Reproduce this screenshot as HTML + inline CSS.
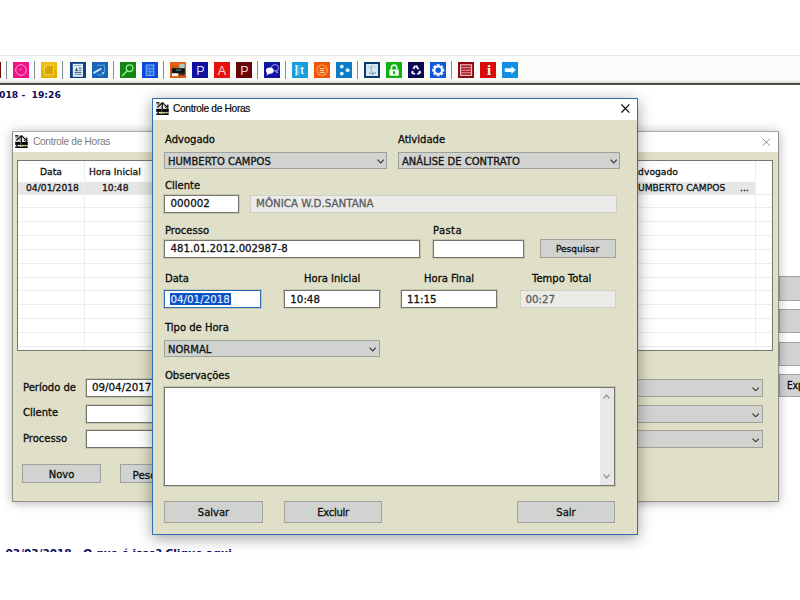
<!DOCTYPE html>
<html lang="pt-BR">
<head>
<meta charset="utf-8">
<title>Controle de Horas</title>
<style>
html,body{margin:0;padding:0;}
body{width:800px;height:600px;overflow:hidden;background:#fff;position:relative;
  font-family:"DejaVu Sans","Liberation Sans",sans-serif;font-size:10px;color:#111;}
.abs,.abs *{position:absolute;box-sizing:border-box;}
.abs{left:0;top:0;}
/* toolbar */
#tb{left:0;top:55px;width:800px;height:29px;background:#fbfbfa;border-top:1px solid #e9e9e9;}
#tbsh{left:0;top:80px;width:800px;height:5px;background:linear-gradient(#f2f3ef 0,#f2f3ef 1px,#e6e8e2 1px,#e6e8e2 2px,#d9dbd5 2px,#d9dbd5 3px,#4c4e48 3px,#4c4e48 5px);}
.ic{top:62px;width:16px;height:16px;overflow:hidden;margin-left:0.4px;}
.ic svg{left:0;top:0;width:16px;height:16px;}
.sep{top:61px;width:1px;height:18px;background:#858b93;}
#clock{left:-7.4px;top:88px;width:120px;height:14px;line-height:14px;font-weight:bold;font-size:9.2px;color:#0a0a5c;white-space:pre;}
#foot{left:-2.5px;top:546px;width:400px;height:6px;overflow:hidden;}
#foot span{left:0;top:0;line-height:14px;font-weight:bold;font-size:10.5px;color:#0a0a5c;white-space:pre;}
/* windows */
.win{background:#e0dfc8;}
#w1{left:12px;top:131px;width:767px;height:371px;border:1px solid #8f8f8a;border-top-color:#a8a8a4;box-shadow:0 1px 10px rgba(0,0,0,.3);}
#w2{left:152px;top:98px;width:486px;height:437px;border:1px solid #2b70b0;box-shadow:0 3px 14px rgba(0,0,0,.38);}
.tbar{left:0;top:0;right:0;background:#fff;}
.ttl{white-space:pre;font-family:"Liberation Sans",sans-serif;}
.lb{white-space:pre;line-height:12px;height:12px;font-size:10px;color:#0c0c0c;-webkit-text-stroke:0.3px #0c0c0c;}
.in{background:#fff;border:1px solid #75756d;box-shadow:0 0 0 1px rgba(120,120,105,.25);}
.in span,.dis span{font-size:10.3px;}
.in span,.cb span,.bt span,.dis span{white-space:pre;line-height:12px;height:12px;-webkit-text-stroke:0.3px currentColor;}
.dis{background:#ebebe8;border:1px solid #cfcfc6;color:#5c5c5c;}
.cb{background:#d0d3cf;border:1px solid #9fa198;}
.cb svg{width:7.4px;height:4.7px;}
.bt{background:#d0d3d0;border:1px solid #a0a29a;text-align:center;}
.bt span{left:0;right:0;text-align:center;-webkit-text-stroke:0.3px #0c0c0c;}
.list{background:#fff;border:1px solid #77776f;overflow:hidden;}
.list i{left:0;right:0;height:1px;background:#ececec;}
.list b{top:0;bottom:0;width:1px;background:#ececec;}
.list span{white-space:pre;line-height:12px;height:12px;font-size:9.2px;-webkit-text-stroke:0.3px #111;}
.rb{left:779px;width:30px;background:#d0d3d0;border:1px solid #a0a29a;}
</style>
</head>
<body>
<div class="abs" id="root">

<!-- toolbar -->
<div id="tb"></div>
<div id="tbsh"></div>
<!--ICONS-->
<div class="ic" style="left:-15px;background:#6e0a10"><svg viewBox="0 0 16 16"></svg></div>
<div class="ic" style="left:13px;background:#ee1289"><svg viewBox="0 0 16 16"><circle cx="8" cy="8" r="5.3" fill="none" stroke="#ff9ad6" stroke-width="1"/><path d="M6.8 7.2 L8.6 7.2" stroke="#ff9ad6" stroke-width="0.9"/></svg></div>
<div class="ic" style="left:41px;background:#e2b004"><svg viewBox="0 0 16 16"><rect x="0" y="0" width="16" height="8" fill="#edc413" opacity=".7"/><path d="M5.2 3.2 L12.6 3.2 L12.6 12.8 L3.4 12.8 L3.4 5 Z" fill="#d9a300" stroke="#f6dc62" stroke-width="0.9"/><path d="M5.2 3.2 L5.2 5 L3.4 5" fill="none" stroke="#f6dc62" stroke-width="0.8"/></svg></div>
<div class="ic" style="left:70px;background:#0e3f80"><svg viewBox="0 0 16 16"><rect x="2.8" y="1.8" width="10.2" height="13" fill="#e4eef8"/><rect x="4.4" y="3" width="7" height="0.9" fill="#7fa0c4"/><path d="M5 9 L6.6 5.2 L8 9 Z" fill="#35557d"/><rect x="8.6" y="5.6" width="3" height="0.9" fill="#35557d"/><rect x="8.6" y="7.6" width="3" height="0.9" fill="#35557d"/><rect x="4.6" y="9.8" width="7" height="1" fill="#35557d"/><rect x="4.6" y="11.8" width="7" height="1" fill="#5878a0"/></svg></div>
<div class="ic" style="left:92px;background:#1a64b6"><svg viewBox="0 0 16 16"><path d="M5 3.2 L12.4 3.2 L12.4 10.4 L10.4 12.8 L5.4 12.8" fill="none" stroke="#5da4e6" stroke-width="1"/><path d="M2.2 10.6 L8.6 7" stroke="#c4e6ff" stroke-width="2" stroke-linecap="round"/><path d="M10 11.4 L12 10.4" stroke="#c4e6ff" stroke-width="1.2"/></svg></div>
<div class="ic" style="left:120px;background:#148414"><svg viewBox="0 0 16 16"><circle cx="9.6" cy="6.2" r="3.3" fill="none" stroke="#8df08d" stroke-width="1.3"/><path d="M7.2 8.8 L2.6 13.6" stroke="#8df08d" stroke-width="1.5" stroke-linecap="round"/></svg></div>
<div class="ic" style="left:142px;background:#0c48da"><svg viewBox="0 0 16 16"><rect x="4.2" y="3" width="7.6" height="10.4" fill="#2a66e0" stroke="#7cb8ff" stroke-width="1"/><path d="M4.2 6.4 H11.8 M4.2 9.6 H11.8 M8 6.4 V13.4" stroke="#5a9cf4" stroke-width="0.9"/></svg></div>
<div class="ic" style="left:170px;background:#d65a10"><svg viewBox="0 0 16 16"><rect x="0" y="0" width="16" height="3" fill="#e0641a"/><path d="M9 2.4 L14.4 1.6 L14.8 7 L9.6 7 Z" fill="#9fd0d0"/><rect x="1.8" y="6.2" width="13" height="5.6" fill="#0c1416"/><rect x="6" y="7.4" width="5" height="1.4" fill="#2e7f8a"/><path d="M2.2 11.2 L8.4 11.2 L7.8 14.2 L1.8 14 Z" fill="#f4f8f8"/><rect x="9.2" y="11.4" width="5.4" height="2" fill="#3a2a20"/></svg></div>
<div class="ic" style="left:192px;background:#10109e"><svg viewBox="0 0 16 16"><text x="8.3" y="13.3" font-family="Liberation Sans, sans-serif" font-size="12.5" text-anchor="middle" fill="#dcdcff">P</text></svg></div>
<div class="ic" style="left:214px;background:#e8100c"><svg viewBox="0 0 16 16"><text x="8" y="13.3" font-family="Liberation Sans, sans-serif" font-size="12.5" text-anchor="middle" fill="#ffd4d4">A</text></svg></div>
<div class="ic" style="left:236px;background:#680808"><svg viewBox="0 0 16 16"><text x="8.3" y="13.3" font-family="Liberation Sans, sans-serif" font-size="12.5" text-anchor="middle" fill="#ffd0d8">P</text></svg></div>
<div class="ic" style="left:264px;background:#1414a2"><svg viewBox="0 0 16 16"><ellipse cx="11" cy="5.8" rx="3.6" ry="3.2" fill="none" stroke="#9c9cf0" stroke-width="1"/><path d="M12.4 8.6 L14 11 L10.6 9.2" fill="none" stroke="#9c9cf0" stroke-width="0.9"/><ellipse cx="5.8" cy="8.6" rx="3.8" ry="3.2" fill="#fff"/><path d="M3.4 10.6 L2.6 13.6 L6 11.6 Z" fill="#fff"/></svg></div>
<div class="ic" style="left:292px;background:#14a0dc"><svg viewBox="0 0 16 16"><rect x="3.4" y="3" width="2" height="10.4" fill="#e8f8ff"/><rect x="2.8" y="5.4" width="0.9" height="1.4" fill="#14a0dc"/><rect x="2.8" y="9.2" width="0.9" height="1.4" fill="#14a0dc"/><rect x="6.4" y="3" width="0.9" height="10.4" fill="#7fd0f2"/><text x="10.2" y="12.2" font-family="Liberation Sans, sans-serif" font-weight="bold" font-size="11" text-anchor="middle" fill="#f0fbff">t</text></svg></div>
<div class="ic" style="left:314px;background:#f05408"><svg viewBox="0 0 16 16"><circle cx="8" cy="8.2" r="5.2" fill="none" stroke="#ffb060" stroke-width="1.1"/><rect x="5.6" y="6" width="4.8" height="1.1" fill="#ffd8a0"/><rect x="5.6" y="8" width="4.8" height="1.1" fill="#ffd8a0"/><rect x="5.6" y="10" width="4.8" height="1.1" fill="#ffd8a0"/></svg></div>
<div class="ic" style="left:336px;background:#0c7cc8"><svg viewBox="0 0 16 16"><circle cx="5.8" cy="4.6" r="1.9" fill="#e4f6ff"/><circle cx="11.6" cy="8.2" r="1.9" fill="#e4f6ff"/><circle cx="5.8" cy="11.6" r="1.9" fill="#e4f6ff"/></svg></div>
<div class="ic" style="left:364px;background:#0c3c6c"><svg viewBox="0 0 16 16"><rect x="2" y="2" width="12" height="12" fill="#d4e8f6"/><path d="M8.6 3.4 C6.6 5.4 6.4 8.2 8.4 10.2 M8.6 10.2 L8.6 13" fill="none" stroke="#7a8c9c" stroke-width="0.9"/><path d="M5 10.6 C7 11.8 10 11.8 12 10.6" fill="none" stroke="#7a8c9c" stroke-width="0.9"/><path d="M5.4 4.6 L6.4 5.6 M10.4 4.4 L11 5.4" stroke="#a89c70" stroke-width="0.9"/></svg></div>
<div class="ic" style="left:386px;background:#10b010"><svg viewBox="0 0 16 16"><path d="M5.4 7.6 V5.8 A2.7 2.7 0 0 1 10.8 5.8 V7.6" fill="none" stroke="#e8ffe8" stroke-width="1.6"/><rect x="3.4" y="7.4" width="9.4" height="6.4" rx="0.8" fill="#f2fff2"/><rect x="7.2" y="9.2" width="1.8" height="3" fill="#10a010"/></svg></div>
<div class="ic" style="left:408px;background:#0a0a52"><svg viewBox="0 0 16 16"><path d="M8 3.4 L10.4 7.2 M11.4 8.8 L12 10.6 L9.2 12.2 M7 12.2 L4.2 11 L4.6 8.8 M5.4 7 L7.2 3.8" fill="none" stroke="#f0f0ff" stroke-width="1.9" stroke-linejoin="round"/></svg></div>
<div class="ic" style="left:430px;background:#1058d8"><svg viewBox="0 0 16 16"><g transform="translate(8.2,8.2)" fill="#f4faff"><rect x="-1.5" y="-6" width="3" height="3.2" transform="rotate(0)"/><rect x="-1.5" y="-6" width="3" height="3.2" transform="rotate(45)"/><rect x="-1.5" y="-6" width="3" height="3.2" transform="rotate(90)"/><rect x="-1.5" y="-6" width="3" height="3.2" transform="rotate(135)"/><rect x="-1.5" y="-6" width="3" height="3.2" transform="rotate(180)"/><rect x="-1.5" y="-6" width="3" height="3.2" transform="rotate(225)"/><rect x="-1.5" y="-6" width="3" height="3.2" transform="rotate(270)"/><rect x="-1.5" y="-6" width="3" height="3.2" transform="rotate(315)"/><circle r="4.6"/><circle r="2.7" fill="#1058d8"/></g></svg></div>
<div class="ic" style="left:458px;background:#8a0c12"><svg viewBox="0 0 16 16"><rect x="2.6" y="2.8" width="11" height="10.6" fill="#a82028" stroke="#ffd4d8" stroke-width="1"/><path d="M3.2 5.6 H13 M3.2 8.2 H13 M3.2 10.8 H13" stroke="#f0a8ac" stroke-width="0.9"/></svg></div>
<div class="ic" style="left:480px;background:#d80c0c"><svg viewBox="0 0 16 16"><text x="8.9" y="12.8" font-family="Liberation Serif, serif" font-weight="bold" font-size="14.5" text-anchor="middle" fill="#fff6f6">i</text></svg></div>
<div class="ic" style="left:502px;background:#1090e0"><svg viewBox="0 0 16 16"><path d="M2.8 6.3 H9.4 V4.3 L13.8 8.1 L9.4 11.9 V9.9 H2.8 Z" fill="#f0faff"/></svg></div>
<div class="sep" style="left:6px"></div><div class="sep" style="left:34px"></div><div class="sep" style="left:62px"></div><div class="sep" style="left:113px"></div><div class="sep" style="left:163px"></div><div class="sep" style="left:257px"></div><div class="sep" style="left:285px"></div><div class="sep" style="left:357px"></div><div class="sep" style="left:451px"></div>
<!--/ICONS-->

<div id="clock">2018 -  19:26</div>
<div id="foot"><span>- 03/03/2018 - O que é isso? Clique aqui</span></div>

<!-- buttons behind at the right edge -->
<div class="rb" style="top:276px;height:25px"></div>
<div class="rb" style="top:309px;height:24px"></div>
<div class="rb" style="top:342px;height:24px"></div>
<div class="rb" style="top:374px;height:23px"><span class="lb" style="left:7px;top:5px;font-family:'DejaVu Sans Condensed','DejaVu Sans',sans-serif">Exportar</span></div>

<!-- back window -->
<div class="win" id="w1">
  <div class="tbar" style="height:20px"></div>
<svg class="wi" style="left:2px;top:3px;width:13px;height:13px" viewBox="0 0 13 13"><rect x="0.3" y="0.8" width="5.4" height="7" fill="#c9c9c9"/><rect x="7" y="3.4" width="5" height="4" fill="#e4e4e4"/><path d="M0.2 0.8 H3.4" stroke="#0a0a0a" stroke-width="1.3"/><path d="M6.3 0.3 V11.6 M6.5 0.6 L1.4 5.4 M6.5 0.6 L11 5 M11.8 2.4 V11.4" fill="none" stroke="#0a0a0a" stroke-width="1.25"/><path d="M2.2 2.4 L3.6 3.8 M9.2 5 L10.4 6.6 M1.2 10.6 H3 M8.4 10.6 H10" stroke="#0a0a0a" stroke-width="0.9"/><rect x="0.2" y="7" width="5.4" height="2.9" fill="#050505"/><rect x="7" y="7" width="5.6" height="2.9" fill="#050505"/><rect x="4" y="10.4" width="8.4" height="0.9" fill="#e6e2a0"/><rect x="0.3" y="11.3" width="12.3" height="1.7" fill="#070707"/><rect x="4.6" y="11.3" width="3" height="0.7" fill="#cfcf88"/></svg>
  <span class="ttl" style="left:20px;top:3px;line-height:13px;font-size:10.2px;color:#7d7d7d;letter-spacing:-0.33px">Controle de Horas</span>
  <div class="list" style="left:4px;top:28px;width:756px;height:191px">
    <div style="left:0;top:21px;width:737px;height:12px;background:#e6e6e6"></div>
    <i style="top:33px"></i><i style="top:46px"></i><i style="top:60px"></i><i style="top:74px"></i><i style="top:88px"></i><i style="top:102px"></i><i style="top:116px"></i><i style="top:129px"></i><i style="top:143px"></i><i style="top:157px"></i><i style="top:171px"></i><i style="top:185px"></i>
    <b style="left:66px"></b><b style="left:737px"></b>
    <span style="left:22px;top:5px">Data</span>
    <span style="left:71px;top:5px">Hora Inicial</span>
    <span style="left:8px;top:21px">04/01/2018</span>
    <span style="left:84px;top:21px">10:48</span>
    <span style="left:614px;top:5px">Advogado</span>
    <span style="left:613px;top:21px">HUMBERTO CAMPOS</span>
    <span style="left:722px;top:21px">...</span>
  </div>
  <span class="lb" style="left:10px;top:250px">Período de</span>
  <div class="in" style="left:73px;top:247px;width:100px;height:18px"><span style="left:5px;top:1px">09/04/2017</span></div>
  <span class="lb" style="left:10px;top:275px">Cliente</span>
  <div class="in" style="left:73px;top:273px;width:100px;height:18px"></div>
  <span class="lb" style="left:10px;top:301px">Processo</span>
  <div class="in" style="left:73px;top:298px;width:100px;height:18px"></div>
  <div class="bt" style="left:9px;top:332px;width:79px;height:19px"><span style="top:4px">Novo</span></div>
  <div class="bt" style="left:107px;top:332px;width:78px;height:19px"><span style="top:4px;left:-3px;font-size:10.4px">Pesquisar</span></div>
  <div class="cb" style="left:500px;top:247px;width:250px;height:18px"><svg style="left:238px;top:6.6px" viewBox="0 0 8 5"><path d="M0.6 0.6 L4 4.1 L7.4 0.6" fill="none" stroke="#333" stroke-width="1.25"/></svg></div>
  <div class="cb" style="left:500px;top:273px;width:250px;height:18px"><svg style="left:238px;top:6.6px" viewBox="0 0 8 5"><path d="M0.6 0.6 L4 4.1 L7.4 0.6" fill="none" stroke="#333" stroke-width="1.25"/></svg></div>
  <div class="cb" style="left:500px;top:298px;width:250px;height:18px"><svg style="left:238px;top:6.6px" viewBox="0 0 8 5"><path d="M0.6 0.6 L4 4.1 L7.4 0.6" fill="none" stroke="#333" stroke-width="1.25"/></svg></div>
  <svg style="left:748.5px;top:5.5px;width:8.6px;height:8.3px" viewBox="0 0 9 9" preserveAspectRatio="none"><path d="M0.5 0.5 L8.5 8.5 M8.5 0.5 L0.5 8.5" stroke="#8a8a8a" stroke-width="1" fill="none"/></svg>
</div>

<!-- front dialog -->
<div class="win" id="w2">
  <div class="tbar" style="height:21px"></div>
  <div style="left:0;top:-1px;width:484px;height:436px">
<svg class="wi" style="left:3px;top:4px;width:13px;height:13px" viewBox="0 0 13 13"><rect x="0.3" y="0.8" width="5.4" height="7" fill="#c9c9c9"/><rect x="7" y="3.4" width="5" height="4" fill="#e4e4e4"/><path d="M0.2 0.8 H3.4" stroke="#0a0a0a" stroke-width="1.3"/><path d="M6.3 0.3 V11.6 M6.5 0.6 L1.4 5.4 M6.5 0.6 L11 5 M11.8 2.4 V11.4" fill="none" stroke="#0a0a0a" stroke-width="1.25"/><path d="M2.2 2.4 L3.6 3.8 M9.2 5 L10.4 6.6 M1.2 10.6 H3 M8.4 10.6 H10" stroke="#0a0a0a" stroke-width="0.9"/><rect x="0.2" y="7" width="5.4" height="2.9" fill="#050505"/><rect x="7" y="7" width="5.6" height="2.9" fill="#050505"/><rect x="4" y="10.4" width="8.4" height="0.9" fill="#e6e2a0"/><rect x="0.3" y="11.3" width="12.3" height="1.7" fill="#070707"/><rect x="4.6" y="11.3" width="3" height="0.7" fill="#cfcf88"/></svg>
  <span class="ttl" style="left:20px;top:4px;line-height:13px;font-size:10.2px;color:#0a0a0a;letter-spacing:-0.33px;-webkit-text-stroke:0.2px #0a0a0a">Controle de Horas</span>
  <svg style="left:468px;top:6px;width:9px;height:9px" viewBox="0 0 9 9"><path d="M0.4 0.4 L8.4 8.6 M8.4 0.4 L0.4 8.6" stroke="#111" stroke-width="1.25" fill="none"/></svg>

  <span class="lb" style="left:12px;top:36px">Advogado</span>
  <span class="lb" style="left:245px;top:36px">Atividade</span>
  <div class="cb" style="left:11px;top:54px;width:223px;height:17px"><span style="left:3px;top:3px">HUMBERTO CAMPOS</span><svg style="left:212px;top:6.4px" viewBox="0 0 8 5"><path d="M0.6 0.6 L4 4.1 L7.4 0.6" fill="none" stroke="#333" stroke-width="1.25"/></svg></div>
  <div class="cb" style="left:245px;top:54px;width:222px;height:17px"><span style="left:3px;top:3px">ANÁLISE DE CONTRATO</span><svg style="left:211px;top:6.4px" viewBox="0 0 8 5"><path d="M0.6 0.6 L4 4.1 L7.4 0.6" fill="none" stroke="#333" stroke-width="1.25"/></svg></div>

  <span class="lb" style="left:12px;top:82px">Cliente</span>
  <div class="in" style="left:11px;top:97px;width:75px;height:18px"><span style="left:5.5px;top:1px">000002</span></div>
  <div class="dis" style="left:97px;top:97px;width:367px;height:18px"><span style="left:5px;top:1px">MÔNICA W.D.SANTANA</span></div>

  <span class="lb" style="left:12px;top:127px">Processo</span>
  <span class="lb" style="left:280px;top:127px;letter-spacing:0.4px">Pasta</span>
  <div class="in" style="left:11px;top:142px;width:256px;height:18px"><span style="left:5.6px;top:2px;font-size:10.2px">481.01.2012.002987-8</span></div>
  <div class="in" style="left:280px;top:142px;width:91px;height:18px"></div>
  <div class="bt" style="left:387px;top:141px;width:76px;height:19px"><span style="top:3px;left:-1px;font-size:9px">Pesquisar</span></div>

  <span class="lb" style="left:12px;top:175px">Data</span>
  <span class="lb" style="left:151px;top:175px">Hora Inicial</span>
  <span class="lb" style="left:271px;top:175px">Hora Final</span>
  <span class="lb" style="left:379px;top:175px">Tempo Total</span>
  <div class="in" style="left:11px;top:192px;width:97px;height:18px;border-color:#2b6cb2"><span style="left:5px;top:2px;height:12px;line-height:12px;background:#0b52c6;color:#eaf3ff;padding:0 1.5px 0 0.5px;-webkit-text-stroke:0.1px #eaf3ff">04/01/2018</span></div>
  <div class="in" style="left:131px;top:192px;width:96px;height:18px"><span style="left:5.3px;top:2px">10:48</span></div>
  <div class="in" style="left:248px;top:192px;width:96px;height:18px"><span style="left:5px;top:2px">11:15</span></div>
  <div class="dis" style="left:367px;top:192px;width:96px;height:18px"><span style="left:4.5px;top:2px">00:27</span></div>

  <span class="lb" style="left:12px;top:224px">Tipo de Hora</span>
  <div class="cb" style="left:11px;top:242px;width:216px;height:17px"><span style="left:3px;top:3px">NORMAL</span><svg style="left:204px;top:6.4px" viewBox="0 0 8 5"><path d="M0.6 0.6 L4 4.1 L7.4 0.6" fill="none" stroke="#333" stroke-width="1.25"/></svg></div>

  <span class="lb" style="left:12px;top:272px">Observações</span>
  <div class="in" style="left:11px;top:289px;width:451px;height:99px">
    <div style="right:0;top:0;bottom:0;width:14px;background:#e9e9e9"></div>
    <svg style="right:4px;top:6px;width:7px;height:5px" viewBox="0 0 7 5"><path d="M0.5 4.5 L3.5 1 L6.5 4.5" fill="none" stroke="#9a9a9a" stroke-width="1.3"/></svg>
    <svg style="right:4px;bottom:6px;width:7px;height:5px" viewBox="0 0 7 5"><path d="M0.5 0.5 L3.5 4 L6.5 0.5" fill="none" stroke="#9a9a9a" stroke-width="1.3"/></svg>
  </div>

  <div class="bt" style="left:11px;top:403px;width:99px;height:22px"><span style="top:5px">Salvar</span></div>
  <div class="bt" style="left:131px;top:403px;width:98px;height:22px"><span style="top:5px;letter-spacing:-0.3px">Excluir</span></div>
  <div class="bt" style="left:364px;top:403px;width:98px;height:22px"><span style="top:5px">Sair</span></div>
  </div>
</div>

</div>
</body>
</html>
